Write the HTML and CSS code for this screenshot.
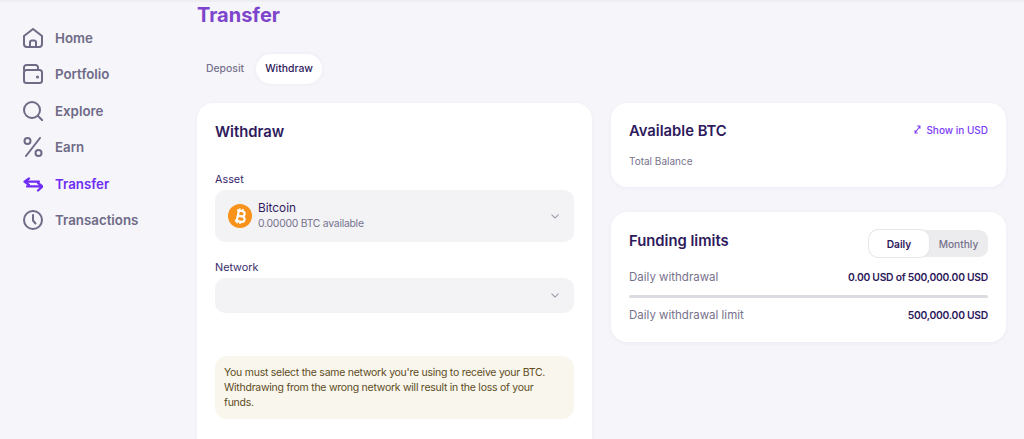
FILE: index.html
```html
<!DOCTYPE html>
<html lang="en">
<head>
    <meta charset="UTF-8">
    <meta name="viewport" content="width=device-width, initial-scale=1.0">
    <title>Transfer</title>
    <link rel="stylesheet" href="styles.css">
</head>
<body>
    <div class="layout">
        <nav class="sidebar">
            <a class="nav-item">
                <svg class="nav-icon" viewBox="0 0 20 20"><path d="M1 8 10 1l9 7v8a3 3 0 0 1-3 3H4a3 3 0 0 1-3-3z"/><path d="M7 19v-4.500a2 2 0 0 1 2-2h2a2 2 0 0 1 2 2V19"/></svg>
                Home
            </a>
            <a class="nav-item">
                <svg class="nav-icon" viewBox="0 0 20 20"><path d="M1 6V3.500A2.500 2.500 0 0 1 3.500 1h9A2.500 2.500 0 0 1 15 3.500V6"/><rect x="1" y="6" width="18" height="13" rx="2.500"/><circle class="dot" cx="14.500" cy="13" r="0.600"/></svg>
                Portfolio
            </a>
            <a class="nav-item">
                <svg class="nav-icon" viewBox="0 0 20 20"><circle cx="9" cy="9" r="8"/><path d="m15 15 4.500 4.500"/></svg>
                Explore
            </a>
            <a class="nav-item">
                <svg class="nav-icon" viewBox="0 0 20 20"><circle cx="4.500" cy="4" r="3"/><circle cx="15.500" cy="16" r="3"/><path d="M17 1 3 19"/></svg>
                Earn
            </a>
            <a class="nav-item active">
                <svg class="nav-icon" viewBox="0 0 20 20"><path d="M16 7.600H1.500M6 4.500 1.500 7.600 6 11"/><path d="M4 12.400h15.500M15 9l4.500 3.400-4.500 4.100"/></svg>
                Transfer
            </a>
            <a class="nav-item">
                <svg class="nav-icon" viewBox="0 0 20 20"><circle cx="10" cy="10" r="9"/><path d="M10 5v5.500l2.500 3"/></svg>
                Transactions
            </a>
        </nav>

        <main class="content">
            <h1 class="page-title">Transfer</h1>
            <div class="tabs">
                <span class="tab">Deposit</span>
                <span class="tab selected">Withdraw</span>
            </div>

            <div class="columns">
                <section class="card form-card">
                    <h2>Withdraw</h2>
                    <label class="field-label asset-label">Asset</label>
                    <div class="select asset-select">
                        <svg class="coin" viewBox="0 0 24 24">
                            <circle cx="12" cy="12" r="12" fill="#f7931a"/>
                            <g transform="rotate(12 12 12)" fill="none" stroke="#fff" stroke-width="2.200">
                                <path d="M8 6.800h5.500a2.600 2.600 0 0 1 0 5.200H9.500m0 0h5a2.700 2.700 0 0 1 0 5.400H8M9.800 6.800v10.600"/>
                                <path stroke-width="1.600" d="M10.500 4.500v2.300M13.500 4.500v2.300M10.500 17.400v2.300M13.500 17.400v2.300"/>
                            </g>
                        </svg>
                        <div class="asset-text">
                            <span class="asset-name">Bitcoin</span>
                            <span class="asset-sub">0.00000 BTC available</span>
                        </div>
                        <svg class="chevron" viewBox="0 0 10 6"><path d="m1 1 4 4 4-4"/></svg>
                    </div>
                    <label class="field-label network-label">Network</label>
                    <div class="select network-select">
                        <svg class="chevron" viewBox="0 0 10 6"><path d="m1 1 4 4 4-4"/></svg>
                    </div>
                    <div class="note">You must select the same network you're using to receive your BTC. Withdrawing from the wrong network will result in the loss of your funds.</div>
                </section>

                <div class="side">
                    <section class="card balance-card">
                        <div class="card-head">
                            <h2>Available BTC</h2>
                            <a class="show-usd">
                                <svg class="swap" viewBox="0 0 10 14"><path d="M1.500 11.500 8 3M4.500 2H8.500V6M1.500 8v4h4"/></svg>
                                Show in USD
                            </a>
                        </div>
                        <p class="muted balance-label">Total Balance</p>
                    </section>

                    <section class="card limits-card">
                        <div class="card-head">
                            <h2>Funding limits</h2>
                            <div class="toggle">
                                <span class="toggle-opt on">Daily</span>
                                <span class="toggle-opt">Monthly</span>
                            </div>
                        </div>
                        <div class="limit-row first">
                            <span class="muted">Daily withdrawal</span>
                            <strong>0.00 USD of 500,000.00 USD</strong>
                        </div>
                        <div class="bar"></div>
                        <div class="limit-row">
                            <span class="muted">Daily withdrawal limit</span>
                            <strong>500,000.00 USD</strong>
                        </div>
                    </section>
                </div>
            </div>
        </main>
    </div>
</body>
</html>
```

FILE: styles.css
```css
* {
    box-sizing: border-box;
}
html, body {
    height: 100%;
}
body {
    margin: 0;
    overflow: hidden;
    background-color: #f5f5fa;
    border-top: 2px solid #eeeef2;
    font-family: Inter, "Liberation Sans", sans-serif;
    color: #2e1a5c;
}
h1, h2, p {
    margin: 0;
}
.layout {
    display: flex;
    height: 437px;
    overflow: hidden;
}
.sidebar {
    width: 197px;
    flex: none;
    padding: 26px 0 0 23px;
    display: flex;
    flex-direction: column;
    gap: 16.400px;
}
.nav-item {
    display: flex;
    align-items: center;
    gap: 12px;
    height: 20px;
    font-size: 13.300px;
    font-weight: 600;
    color: #6f6a86;
}
.nav-item.active {
    color: #6f2cf5;
}
.nav-icon {
    width: 20px;
    height: 20px;
    flex: none;
    fill: none;
    stroke: currentColor;
    stroke-width: 2;
    stroke-linecap: round;
    stroke-linejoin: round;
}
.nav-icon .dot {
    fill: currentColor;
}
.active .nav-icon {
    stroke-width: 2.200;
}
.content {
    flex: none;
    width: 809px;
}
.page-title {
    font-size: 20px;
    line-height: 26px;
    font-weight: 700;
    color: #7c45cb;
}
.tabs {
    display: flex;
    margin-top: 26px;
    height: 30px;
    font-size: 10.400px;
    font-weight: 500;
}
.tab {
    display: flex;
    align-items: center;
    padding: 0 12px 1px 9px;
    color: #77728c;
}
.tab.selected {
    width: 66px;
    justify-content: center;
    padding: 0 0 1px;
    background-color: #fff;
    border-radius: 15px;
    color: #2e1a5c;
    box-shadow: 0 0 4px rgba(60, 50, 110, 0.06);
}
.columns {
    display: flex;
    gap: 19px;
    margin-top: 19px;
    align-items: flex-start;
}
.card {
    width: 395px;
    background-color: #fff;
    border-radius: 16px;
    box-shadow: 0 1px 4px rgba(60, 50, 110, 0.05);
}
.card h2 {
    font-size: 14.800px;
    line-height: 20px;
    font-weight: 600;
    color: #2e1a5c;
}
.form-card {
    height: 400px;
    padding: 19px 18px 0;
}
.field-label {
    display: block;
    font-size: 10.800px;
    line-height: 14px;
    color: #3a2a6b;
}
.asset-label {
    margin-top: 31px;
}
.network-label {
    margin-top: 19px;
}
.select {
    display: flex;
    align-items: center;
    padding: 0 15px 0 13px;
    background-color: #f3f3f6;
    border-radius: 10px;
}
.asset-select {
    height: 52px;
    margin-top: 3px;
}
.network-select {
    height: 35px;
    margin-top: 3px;
}
.coin {
    width: 24px;
    height: 24px;
    flex: none;
}
.asset-text {
    display: flex;
    flex-direction: column;
    margin-left: 6px;
    line-height: 16px;
}
.asset-name {
    font-size: 11.800px;
    color: #2e1a5c;
}
.asset-sub {
    font-size: 10.400px;
    letter-spacing: -0.250px;
    color: #77728c;
}
.chevron {
    width: 8px;
    height: 5px;
    margin-left: auto;
    fill: none;
    stroke: #9a96aa;
    stroke-width: 1.300;
    stroke-linecap: round;
}
.note {
    margin-top: 43px;
    padding: 9px 9px 8px;
    background-color: #f9f6ed;
    border-radius: 12px;
    font-size: 10.500px;
    letter-spacing: -0.260px;
    line-height: 15.200px;
    color: #5e4c1e;
}
.side {
    display: flex;
    flex-direction: column;
    gap: 25px;
}
.card-head {
    display: flex;
    justify-content: space-between;
    align-items: flex-start;
}
.balance-card {
    height: 84px;
    padding: 18px 18px 0;
}
.show-usd {
    display: flex;
    align-items: center;
    gap: 5px;
    height: 17px;
    font-size: 10px;
    font-weight: 500;
    color: #7a3cf5;
}
.swap {
    width: 7px;
    height: 11px;
    fill: none;
    stroke: currentColor;
    stroke-width: 1.500;
}
.muted {
    font-size: 11.500px;
    color: #77728c;
}
.balance-label {
    margin-top: 14px;
    font-size: 10px;
}
.limits-card {
    height: 130px;
    padding: 18px 18px 0;
}
.limits-card h2 {
    margin-top: 1px;
}
.toggle {
    display: flex;
    width: 119px;
    height: 27px;
    background-color: #ececef;
    border-radius: 9px;
    font-size: 10.200px;
    font-weight: 500;
    color: #77728c;
}
.toggle-opt {
    display: flex;
    flex: 1;
    align-items: center;
    justify-content: center;
}
.toggle-opt.on {
    flex: none;
    width: 60px;
    background-color: #fff;
    border-radius: 9px;
    color: #2e1a5c;
    font-weight: 600;
    box-shadow: 0 0 0 1px #e6e6ea;
}
.limit-row {
    display: flex;
    justify-content: space-between;
    align-items: center;
    height: 16px;
    margin-top: 9px;
}
.limit-row.first {
    margin-top: 12px;
}
.limit-row strong {
    font-size: 10.300px;
    letter-spacing: -0.250px;
    font-weight: 600;
    color: #2e1a5c;
}
.bar {
    height: 3px;
    margin-top: 10px;
    background-color: #dcdbe2;
    border-radius: 2px;
}
```
